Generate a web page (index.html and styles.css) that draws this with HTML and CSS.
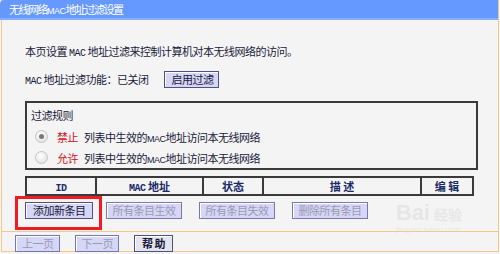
FILE: index.html
```html
<!DOCTYPE html>
<html lang="zh-CN">
<head>
    <meta charset="UTF-8">
    <title>无线网络MAC地址过滤设置</title>
    <link rel="stylesheet" href="styles.css">
</head>
<body>
<div class="page">
    <div class="title">无线网络<span class="asc">MAC</span>地址过滤设置</div>

    <div class="content">
        <p class="intro">本页设置 <span class="mono">MAC</span> 地址过滤来控制计算机对本无线网络的访问。</p>

        <div class="status">
            <span><span class="mono">MAC</span> 地址过滤功能：已关闭</span>
            <button class="btn">启用过滤</button>
        </div>

        <div class="rules">
            <div class="rules-title">过滤规则</div>
            <div class="rule">
                <span class="radio checked"></span>
                <span class="red">禁止</span>
                <span>列表中生效的<span class="asc">MAC</span>地址访问本无线网络</span>
            </div>
            <div class="rule">
                <span class="radio"></span>
                <span class="red">允许</span>
                <span>列表中生效的<span class="asc">MAC</span>地址访问本无线网络</span>
            </div>
        </div>

        <table class="list">
            <tr>
                <th class="c-id"><span class="mono">ID</span></th>
                <th class="c-mac"><span class="mono">MAC</span> 地址</th>
                <th class="c-state">状态</th>
                <th class="c-desc">描 述</th>
                <th class="c-edit">编 辑</th>
            </tr>
        </table>

        <div class="actions">
            <span class="mark"><button class="btn">添加新条目</button></span>
            <button class="btn off">所有条目生效</button>
            <button class="btn off">所有条目失效</button>
            <button class="btn off">删除所有条目</button>
        </div>
    </div>

    <div class="footer">
        <button class="btn off">上一页</button>
        <button class="btn off">下一页</button>
        <button class="btn bold">帮 助</button>
    </div>

    <div class="watermark">Bai<span>经验</span><small>jingyan.baidu.com</small></div>
</div>
</body>
</html>
```

FILE: styles.css
```css
body {
    margin: 0;
    background: #f4f4f4;
    font-family: "Noto Sans CJK SC", "Liberation Sans", sans-serif;
    font-size: 11px;
    letter-spacing: -0.5px;
    color: #1a1a3a;
}
.page {
    position: relative;
    width: 496px;
    height: 251px;
    margin-left: 1px;
    border-left: 1px solid #f2c98a;
    border-right: 1px solid #f2c98a;
    border-bottom: 1px solid #f2c98a;
    background: #f4f4f4;
}
.title {
    height: 18px;
    line-height: 18px;
    margin-left: -2px;
    padding-left: 9px;
    background: #6699ff;
    border-bottom: 2px solid #86adff;
    border-top-left-radius: 4px;
    color: #fff;
    font-size: 11px;
    letter-spacing: -1.5px;
}
.asc {
    font-family: "Liberation Sans", sans-serif;
    font-size: 9px;
    letter-spacing: -0.5px;
}
.mono {
    font-family: "Liberation Mono", monospace;
    font-size: 10px;
    letter-spacing: -0.5px;
}
.content {
    padding: 0 0 0 23px;
}
.intro {
    margin: 0;
    padding-top: 21px;
    height: 20px;
    line-height: 20px;
}
.status {
    display: flex;
    align-items: center;
    gap: 16px;
    margin-top: 9px;
    height: 18px;
}
.btn {
    margin: 0;
    font-family: "Noto Sans CJK SC", sans-serif;
    font-size: 11px;
    letter-spacing: -0.5px;
    height: 17px;
    line-height: 13px;
    padding: 0 5px 0 6px;
    background: #d6d6f6;
    border: 1px solid #50507e;
    box-shadow: inset 1px 1px 0 #fff;
    color: #1a1a3a;
    cursor: pointer;
}
.btn.off {
    color: #9a9ab4;
    border-color: #7878aa;
}
.btn.bold {
    font-weight: bold;
    background: #e4e4ee;
    padding: 0 7px;
}
.rules {
    margin-top: 13px;
    width: 445px;
    height: 65px;
    border: 2px solid #3a3a3a;
    padding-left: 4px;
}
.rules-title {
    height: 22px;
    line-height: 22px;
    margin-top: 1px;
}
.rule {
    display: flex;
    align-items: center;
    gap: 6px;
    height: 21px;
}
.radio {
    width: 11px;
    height: 11px;
    margin-left: 4px;
    margin-right: 3px;
    border: 1px solid #c4c4c4;
    border-radius: 50%;
    background: radial-gradient(circle at 40% 35%, #ffffff, #dcdcdc);
    position: relative;
}
.radio.checked::after {
    content: "";
    position: absolute;
    left: 3px;
    top: 3px;
    width: 5px;
    height: 5px;
    border-radius: 50%;
    background: #777;
}
.red {
    color: #d01020;
}
.list {
    margin-top: 6px;
    width: 449px;
    border-collapse: collapse;
    border: 2px solid #3a3a3a;
}
.list th {
    height: 16px;
    padding: 0;
    border: 2px solid #3a3a3a;
    font-weight: bold;
    color: #1a2a6a;
    font-size: 11px;
    letter-spacing: 0;
}
.c-id { width: 68px; }
.c-mac { width: 105px; }
.c-state { width: 58px; }
.c-desc { width: 156px; }
.actions {
    display: flex;
    align-items: center;
    gap: 17px;
    margin-top: 6px;
    height: 17px;
}
.mark {
    position: relative;
    z-index: 1;
    display: inline-flex;
    margin: -6px -13px -11px -10px;
    padding: 3px 6px 8px 7px;
    border: 3px solid #ee1c24;
}
.mark .btn {
    padding: 0 6px 0 7px;
}
.footer {
    display: flex;
    gap: 15px;
    margin-top: 12px;
    padding-top: 3px;
    padding-left: 13px;
    border-top: 1px solid #f2c98a;
}
.watermark {
    position: absolute;
    right: 36px;
    bottom: 16px;
    font-family: "Liberation Sans", sans-serif;
    font-size: 22px;
    font-weight: bold;
    letter-spacing: 0;
    color: rgba(205, 205, 205, 0.35);
    line-height: 20px;
}
.watermark span {
    font-size: 14px;
    margin-left: 4px;
}
.watermark small {
    display: block;
    font-size: 8px;
    font-weight: normal;
    line-height: 10px;
}
```
